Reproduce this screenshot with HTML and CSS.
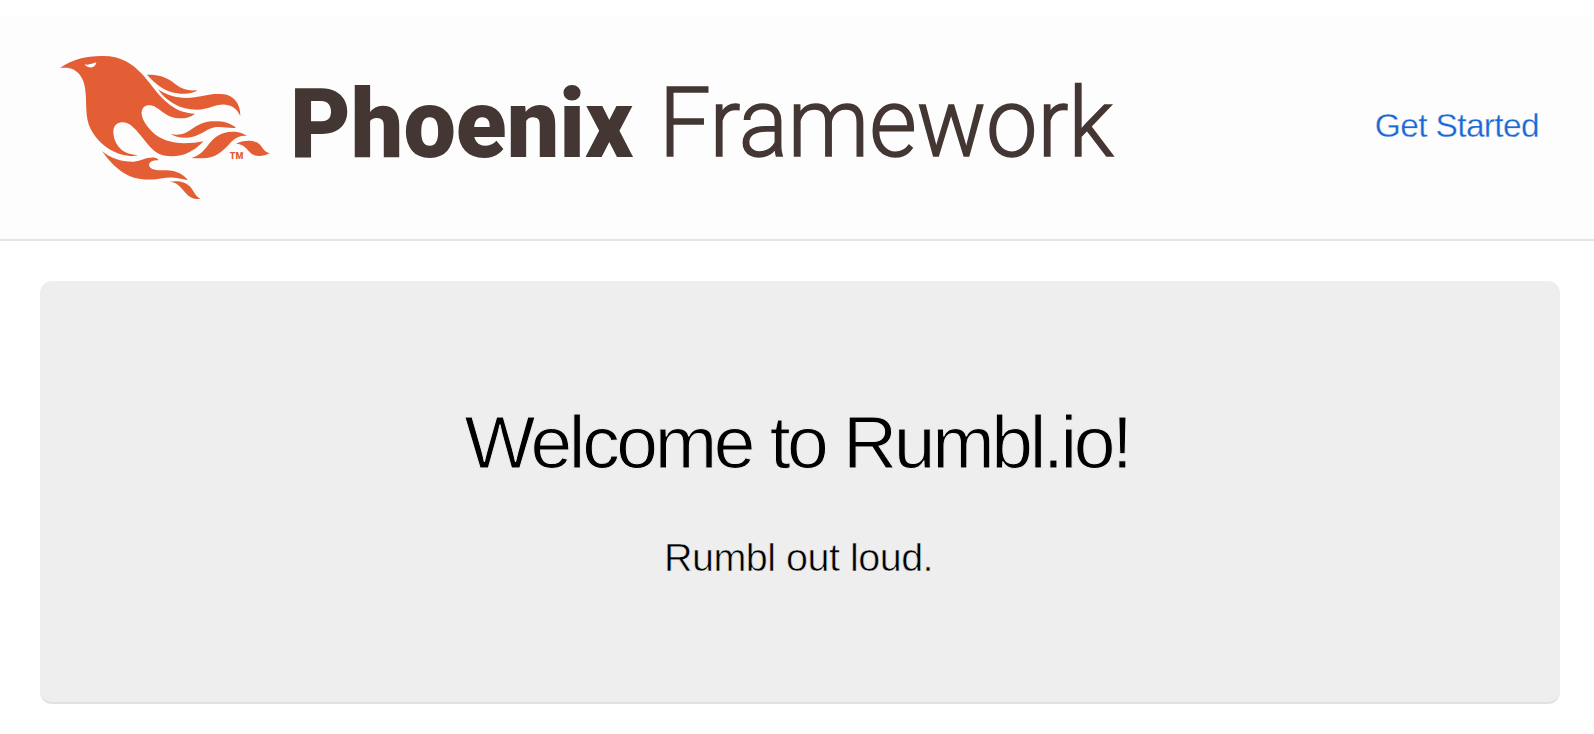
FILE: index.html
```html
<!DOCTYPE html>
<html lang="en">
<head>
<meta charset="utf-8">
<title>Hello Rumbl!</title>
<link rel="stylesheet" href="styles.css">
</head>
<body>
<header class="header">
  <svg class="logo" width="1070" height="150" viewBox="0 0 1070 150" role="img" aria-label="Phoenix Framework">
    <g transform="translate(-10 -10) scale(.33333)">
      <path class="flame" d="M30 69C68 42 112 32 160 33C212 33 246 55 277 88C306 121 328 157 359 179C384 197 408 205 435 206C424 216 407 221 385 220C361 219 344 207 327 193C316 184 304 179 293 181C280 184 274 193 275 207C277 226 291 244 307 261C331 284 365 294 402 295C425 295 443 292 460 289C442 309 418 326 392 331C370 336 344 334 328 327C302 314 286 286 265 263C250 245 234 230 214 232C198 234 190 245 190 262C191 287 203 307 221 319C234 327 249 330 264 331C246 336 225 333 203 325C166 311 138 283 122 252C105 219 110 178 107 145C105 112 95 88 72 74C58 67 44 68 30 69Z"/>
      <path class="eye" d="M103 58C115 61 128 56 139 52C138 59 135 64 128 67C119 68 109 66 103 58Z"/>
      <path class="flame" d="M291 89C322 88 348 95 369 112C389 128 404 139 442 136C431 145 408 149 382 145C345 140 319 120 291 89Z"/>
      <path class="flame" d="M324 133C355 156 396 162 434 157C467 152 486 144 522 148C551 152 572 176 571 213C562 193 548 181 526 179C499 176 477 194 441 194C389 194 350 170 324 133Z"/>
      <path class="flame" d="M362 267C391 273 407 265 430 249C454 232 477 227 506 229C530 231 547 239 558 248C539 251 517 243 494 247C466 252 448 277 413 278C391 279 373 274 362 267Z"/>
      <path class="flame" d="M425 338C448 332 460 319 475 299C494 275 515 260 547 260C567 260 583 266 592 273C574 271 559 276 544 290C521 316 499 340 456 340C444 340 434 340 425 338Z"/>
      <path class="flame" d="M558 296C574 288 600 283 620 292C639 302 635 318 659 325C642 334 617 338 602 324C587 309 581 297 558 296Z"/>
      <path class="flame" d="M156 318C182 341 217 351 251 350C277 347 292 334 315 338C321 340 325 342 325 346C309 346 298 350 297 360C300 377 326 376 349 376C380 377 399 387 414 406C389 400 367 394 337 400C306 406 270 406 238 393C204 378 176 346 156 318Z"/>
      <path class="flame" d="M357 410C383 406 405 409 421 425C433 440 437 456 452 461C435 464 420 460 407 444C391 425 381 411 357 410Z"/>
    </g>
    <text class="trademark" x="169.8" y="103.5" textLength="13.5" lengthAdjust="spacingAndGlyphs">TM</text>
    <text class="word-bold" x="230" y="101.7" textLength="343" lengthAdjust="spacingAndGlyphs">Phoenix</text>
    <text class="word-light" x="599" y="101.2" textLength="454.5" lengthAdjust="spacingAndGlyphs">Framework</text>
  </svg>
  <nav class="nav"><a class="nav-link" href="#">Get Started</a></nav>
</header>
<main class="jumbotron">
  <h1 class="title">Welcome to Rumbl.io!</h1>
  <p class="lead">Rumbl out loud.</p>
</main>
</body>
</html>
```
FILE: styles.css
```css
* { box-sizing: border-box; }
body {
  margin: 0;
  padding-top: 16px;
  background: #fff;
  font-family: "Liberation Sans", Arial, sans-serif;
  color: #000;
}
.header {
  height: 225px;
  padding: 39px 55px 0 60px;
  display: flex;
  justify-content: space-between;
  align-items: flex-start;
  background: #fdfdfd;
  border-bottom: 2px solid #e5e5e5;
}
.logo { display: block; overflow: visible; }
.flame { fill: #e35e35; }
.eye { fill: #fdfdfd; }
.trademark { font: 900 9px Roboto, sans-serif; fill: #e35e35; }
.word-bold { font: 900 97px Roboto, sans-serif; fill: #433633; }
.word-light { font: 300 95.5px Roboto, sans-serif; fill: #433633; stroke: #433633; stroke-width: 1.5; }
.nav { padding-top: 52px; }
.nav-link {
  display: block;
  font-size: 33.5px;
  line-height: 38px;
  letter-spacing: -.65px;
  color: #1a68d6;
  text-decoration: none;
  white-space: nowrap;
  -webkit-text-stroke: .3px #fdfdfd;
}
.jumbotron {
  height: 423px;
  margin: 40px 34px 0 40px;
  padding-top: 121px;
  background: #eee;
  border-bottom: 2px solid #e1e1e1;
  border-radius: 12px;
  text-align: center;
}
.title {
  margin: 0;
  padding-right: 6px;
  font-size: 75px;
  font-weight: 400;
  line-height: 80px;
  letter-spacing: -3.35px;
  -webkit-text-stroke: 1px #eee;
}
.lead {
  margin: 50px 0 0;
  padding-right: 3px;
  font-size: 39.5px;
  line-height: 50px;
  letter-spacing: -.5px;
  -webkit-text-stroke: .6px #eee;
}
```
